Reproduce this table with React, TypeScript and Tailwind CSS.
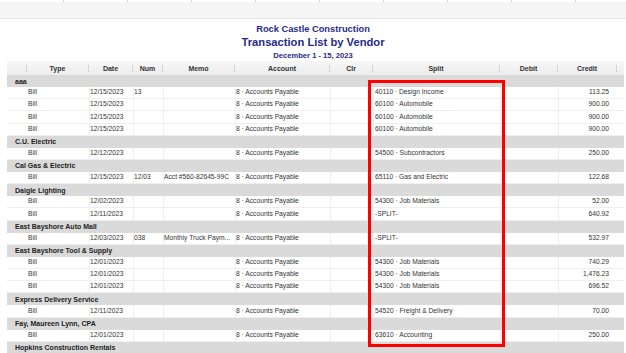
import React from "react";

type Row =
  | { kind: "group"; name: string }
  | { kind: "data"; date: string; num?: string; memo?: string; split: string; credit: string };

const rows: Row[] = [
  { kind: "group", name: "aaa" },
  { kind: "data", date: "12/15/2023", num: "13", split: "40110 · Design Income", credit: "113.25" },
  { kind: "data", date: "12/15/2023", split: "60100 · Automobile", credit: "900.00" },
  { kind: "data", date: "12/15/2023", split: "60100 · Automobile", credit: "900.00" },
  { kind: "data", date: "12/15/2023", split: "60100 · Automobile", credit: "900.00" },
  { kind: "group", name: "C.U. Electric" },
  { kind: "data", date: "12/12/2023", split: "54500 · Subcontractors", credit: "250.00" },
  { kind: "group", name: "Cal Gas & Electric" },
  { kind: "data", date: "12/15/2023", num: "12/03", memo: "Acct #560-82645-99C", split: "65110 · Gas and Electric", credit: "122.68" },
  { kind: "group", name: "Daigle Lighting" },
  { kind: "data", date: "12/02/2023", split: "54300 · Job Materials", credit: "52.00" },
  { kind: "data", date: "12/11/2023", split: "-SPLIT-", credit: "640.92" },
  { kind: "group", name: "East Bayshore Auto Mall" },
  { kind: "data", date: "12/03/2023", num: "038", memo: "Monthly Truck Paym...", split: "-SPLIT-", credit: "532.97" },
  { kind: "group", name: "East Bayshore Tool & Supply" },
  { kind: "data", date: "12/01/2023", split: "54300 · Job Materials", credit: "740.29" },
  { kind: "data", date: "12/01/2023", split: "54300 · Job Materials", credit: "1,476.23" },
  { kind: "data", date: "12/01/2023", split: "54300 · Job Materials", credit: "696.52" },
  { kind: "group", name: "Express Delivery Service" },
  { kind: "data", date: "12/11/2023", split: "54520 · Freight & Delivery", credit: "70.00" },
  { kind: "group", name: "Fay, Maureen Lynn, CPA" },
  { kind: "data", date: "12/01/2023", split: "63610 · Accounting", credit: "250.00" },
  { kind: "group", name: "Hopkins Construction Rentals" },
];

const cols = "grid grid-cols-[20px_62px_44px_30px_72px_95px_43px_127px_58px_59px_7px]";

const headers = ["", "Type", "Date", "Num", "Memo", "Account", "Clr", "Split", "Debit", "Credit"];

function HeaderCell({ label }: { label: string }) {
  return (
    <div className="flex items-center h-full">
      <div className="flex-1 text-center font-bold text-[7px] text-[#333] leading-none whitespace-nowrap">{label}</div>
      <div className="w-0 h-[7px] border-r border-dotted border-[#b8b8b8]" />
    </div>
  );
}

export default function App() {
  return (
    <div className="relative w-[626px] h-[353px] overflow-hidden bg-white font-['Liberation_Sans',Arial,sans-serif]">
      {/* toolbar remnant */}
      <div className="flex h-[2px]">
        {Array.from({ length: 10 }).map((_, i) => (
          <div key={i} className="w-[64px] shrink-0 border-r border-[#d6d6d6]" />
        ))}
      </div>
      <div className="h-[17px] bg-[#f5f5f5] border-b border-[#e6e6e6]" />

      {/* title */}
      <div className="flex flex-col items-center pt-[5px] text-[#1f2a8a] font-bold">
        <div className="text-[9.3px] leading-[11px] h-[11px]">Rock Castle Construction</div>
        <div className="text-[11.2px] leading-[14px] h-[14px]">Transaction List by Vendor</div>
        <div className="text-[7.6px] leading-[10px] h-[10px] mt-[2px]">December 1 - 15, 2023</div>
      </div>

      {/* table */}
      <div className="ml-[7px] w-[617px]">
        <div className={`${cols} h-[14px] bg-gradient-to-b from-[#f7f7f7] to-[#ececec]`}>
          {headers.map((h, i) => (
            <HeaderCell key={i} label={h} />
          ))}
          <div />
        </div>
        {rows.map((r, i) =>
          r.kind === "group" ? (
            <div
              key={i}
              className="h-[12.14px] bg-[#dadada] flex items-center pl-[8px] text-[7px] font-bold text-[#222] leading-none whitespace-nowrap"
            >
              {r.name}
            </div>
          ) : (
            <div
              key={i}
              className={`${cols} h-[12.14px] border-b border-[#efefef] text-[6.7px] text-[#333] leading-none whitespace-nowrap`}
            >
              <div />
              <div className="flex items-center pl-[1px]">Bill</div>
              <div className="flex items-center border-l border-[#eeeeee]">{r.date}</div>
              <div className="flex items-center border-l border-[#eeeeee]">{r.num ?? ""}</div>
              <div className="flex items-center border-l border-[#eeeeee] overflow-hidden">{r.memo ?? ""}</div>
              <div className="flex items-center border-l border-[#eeeeee]">8 · Accounts Payable</div>
              <div className="flex items-center border-l border-[#eeeeee]" />
              <div className="flex items-center border-l border-[#eeeeee] pl-[1px]">{r.split}</div>
              <div className="flex items-center border-l border-[#eeeeee]" />
              <div className="flex items-center justify-end border-l border-[#eeeeee] pr-[8px]">{r.credit}</div>
              <div />
            </div>
          )
        )}
      </div>

      {/* red highlight box */}
      <div className="absolute left-[368px] top-[80px] w-[137px] h-[267px] border-[3px] border-[#ff0000]" />
    </div>
  );
}
